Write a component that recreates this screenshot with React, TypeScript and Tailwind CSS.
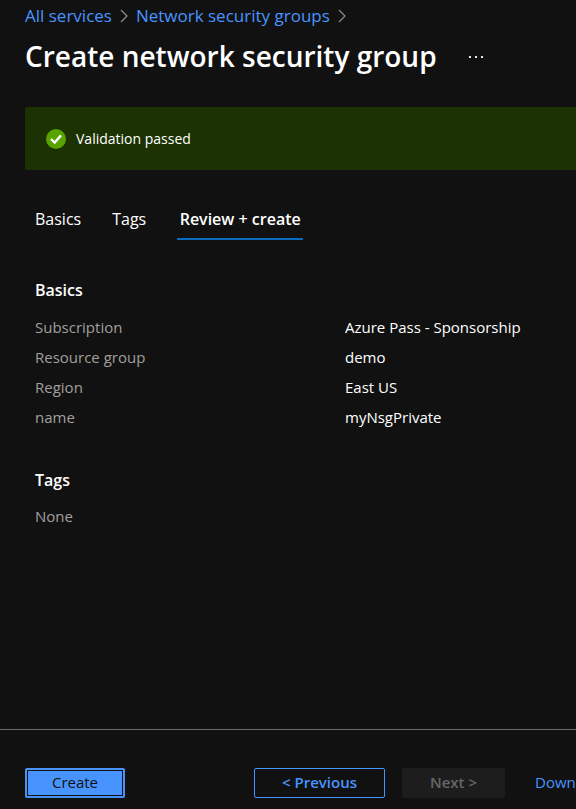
const details = [
  { label: "Subscription", value: "Azure Pass - Sponsorship" },
  { label: "Resource group", value: "demo" },
  { label: "Region", value: "East US" },
  { label: "name", value: "myNsgPrivate" },
];

function Chevron() {
  return (
    <svg viewBox="0 0 8 14" className="h-3.5 w-2 shrink-0" fill="none" stroke="#8f8f8f" strokeWidth="1.2" aria-hidden="true">
      <path d="M1 1 7 7 1 13" />
    </svg>
  );
}

function Breadcrumb() {
  return (
    <nav aria-label="Breadcrumb" className="flex h-8 items-center gap-2 text-[17px] leading-6 text-[#4894fe]">
      <a href="#services">All services</a>
      <Chevron />
      <a href="#groups">Network security groups</a>
      <Chevron />
    </nav>
  );
}

function ValidationBanner() {
  return (
    <div role="status" className="ml-[25px] mt-[27px] flex h-[63px] items-center gap-2.5 rounded-l-xs bg-[#1c3202] pl-[21px] text-sm text-white">
      <svg viewBox="0 0 20 20" className="size-5" aria-hidden="true">
        <circle cx="10" cy="10" r="10" fill="#57a300" />
        <path d="M5 10 8.7 13.6 15 6.4" fill="none" stroke="#fff" strokeWidth="2.4" />
      </svg>
      <span>Validation passed</span>
    </div>
  );
}

export default function App() {
  return (
    <div className="flex min-h-screen flex-col overflow-hidden bg-[#111111] font-['Open_Sans','Noto_Sans',sans-serif] text-white">
      <header className="px-[25px]">
        <Breadcrumb />
        <div className="flex h-12 items-center gap-8">
          <h1 className="whitespace-nowrap text-[28px] font-semibold leading-10">Create network security group</h1>
          <button type="button" aria-label="More options" className="pt-0.5">
            <svg viewBox="0 0 14 4" className="h-1 w-3.5" fill="#ffffff" aria-hidden="true">
              <rect x="0" y="1" width="2" height="2" rx="0.5" />
              <rect x="6" y="1" width="2" height="2" rx="0.5" />
              <rect x="12" y="1" width="2" height="2" rx="0.5" />
            </svg>
          </button>
        </div>
      </header>
      <ValidationBanner />
      <main className="flex-1 px-[35px] text-base leading-6">
        <div role="tablist" className="mt-[35px] flex h-[35px] items-stretch gap-[31px]">
          <button type="button" role="tab" className="pb-2">Basics</button>
          <button type="button" role="tab" className="pb-2">Tags</button>
          <button type="button" role="tab" aria-selected="true" className="w-[126px] border-b-2 border-[#0b6bbd] pb-1.5 font-semibold">
            Review + create
          </button>
        </div>
        <section className="mt-[38px]">
          <h2 className="font-semibold">Basics</h2>
          <dl className="mt-2.5">
            {details.map(({ label, value }) => (
              <div key={label} className="flex h-[30px] items-center text-[15px]">
                <dt className="w-[310px] shrink-0 text-[#a19f9d]">{label}</dt>
                <dd>{value}</dd>
              </div>
            ))}
          </dl>
        </section>
        <section className="mt-9">
          <h2 className="font-semibold">Tags</h2>
          <p className="mt-3 text-[15px] text-[#a19f9d]">None</p>
        </section>
      </main>
      <footer className="flex h-20 items-start whitespace-nowrap border-t border-[#6b6b6b] pl-[25px] pt-[38px] text-[15px]">
        <button type="button" className="h-[30px] w-[100px] shrink-0 rounded-xs bg-[#4894fe] p-0.5 text-[#111111]">
          <span className="flex h-full items-center justify-center border border-[#111111] pb-0.5">Create</span>
        </button>
        <button type="button" className="ml-[129px] h-[30px] w-[131px] shrink-0 rounded-xs border border-[#4894fe] pb-0.5 font-semibold text-[#4894fe]">
          &lt; Previous
        </button>
        <button type="button" disabled className="ml-[17px] h-[30px] w-[103px] shrink-0 rounded-xs bg-[#1d1d1d] pb-0.5 font-semibold text-[#666666]">
          Next &gt;
        </button>
        <a href="#template" className="ml-[30px] leading-7 text-[#4894fe]">Down</a>
      </footer>
    </div>
  );
}
